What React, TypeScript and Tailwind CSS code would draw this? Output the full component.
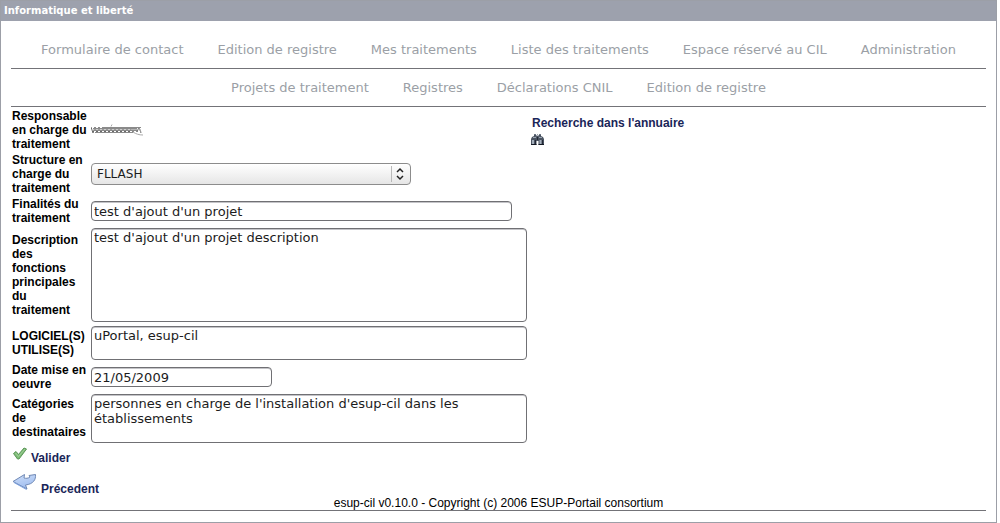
import React from 'react';

const mainMenu = [
  'Formulaire de contact',
  'Edition de registre',
  'Mes traitements',
  'Liste des traitements',
  'Espace réservé au CIL',
  'Administration',
];

const subMenu = ['Projets de traitement', 'Registres', 'Déclarations CNIL', 'Edition de registre'];

const fontUi = "font-['DejaVu_Sans',sans-serif] text-[#1c1c1c]";
const box = `${fontUi} text-[13px] block max-w-full bg-white border border-[#707074] rounded-[4px] px-[2px] shadow-[inset_0_1px_0_#c4c4c8]`;
const linkStyle = 'font-bold text-[#1a2558] hover:underline';

const Menu = ({ items, label, height }: { items: string[]; label: string; height: string }) => (
  <nav aria-label={label} className={`border-b border-[#737378] ${height}`}>
    <ul className="flex flex-wrap justify-center gap-x-[34px]">
      {items.map((item) => (
        <li key={item}>
          <a href="#" className="font-['DejaVu_Sans',sans-serif] text-[13px] leading-[18px] text-[#9b9fa6] hover:underline block">
            {item}
          </a>
        </li>
      ))}
    </ul>
  </nav>
);

const Row = ({ label, id, height, children }: { label: React.ReactNode; id: string; height: string; children: React.ReactNode }) => (
  <div className={`grid grid-cols-[77px_438px_1fr] gap-x-[2px] items-center ${height}`}>
    <label htmlFor={id} className="font-bold">{label}</label>
    {children}
  </div>
);

const Binoculars = () => (
  <svg width="13" height="12" viewBox="0 0 13 12" aria-hidden="true">
    <path d="M3 1h2v2h3V1h2v2l2 1 1 2v6H7.500V8h-2v4H0V6l1-2 2-1z" fill="#4a5361" />
    <path d="M3 1.500h2M8 1.500h2" stroke="#6d7683" />
    <path d="M2 4.500h3M8 4.500h3" stroke="#98a2b0" />
    <path d="M1 7h2v4H1zM8.500 7h2v4h-2z" fill="#a3aebb" />
    <path d="M4.500 7v4M11.500 7v4" stroke="#222936" />
    <path d="M5 3.500L6.500 1.500 8 3.500" stroke="#7d8694" fill="none" />
    <path d="M0 11.500h5.500M7.500 11.500H13" stroke="#151a24" />
    <path d="M6.500 4v3" stroke="#222936" />
  </svg>
);

const CheckIcon = () => (
  <svg width="16" height="14" viewBox="0 0 16 14" aria-hidden="true">
    <path d="M1.500 6.500L4 4.500l2.500 3L12 1l2.500 1L7 12H5.500z" fill="#7dbb76" stroke="#5a9657" strokeLinejoin="round" />
    <path d="M3.500 6l3 3.500L13 2" stroke="#9fd198" fill="none" />
  </svg>
);

const BackIcon = () => (
  <svg width="25" height="19" viewBox="0 0 25 19" aria-hidden="true">
    <defs>
      <linearGradient id="back" x1="0" y1="0" x2="0.400" y2="1">
        <stop offset="0" stopColor="#cfdff8" />
        <stop offset="1" stopColor="#9fbdf0" />
      </linearGradient>
    </defs>
    <path
      d="M1 8.500L12.500 1.500 12 5c2 .5 4 .5 6-1l-1-1.500 6.500-1c.5 5-2 9.500-10 10.500l1.500 4z"
      fill="url(#back)"
      stroke="#7089b5"
      strokeLinejoin="round"
    />
    <path d="M2 9.500l12.500 7" stroke="#7da2e0" fill="none" />
  </svg>
);

// Hand-scribbled strike hiding the person's name
const Scribble = () => (
  <svg width="54" height="14" viewBox="0 0 54 14" role="img" aria-label="Nom masqué">
    <path d="M0 4l2 6 2-6 2 6 2-6 2 6 2-6 2 6 2-6 2 6 2-6 2 6 2-6 2 6 2-6 2 6 2-6 2 6 2-6 2 6 2-6 2 5 2-5 2 5 2-5 2 6" stroke="#6a6a6a" fill="none" />
    <path d="M2 5.500h44M3 7.500h43M12 4.500h38M4 9.500h38" stroke="#8a8a8a" fill="none" />
    <path d="M20 3.500l1-2M42 9c3 2 6 3 10 3M48 5l2 4" stroke="#aaa" fill="none" />
  </svg>
);

export default function App() {
  return (
    <div className="mr-[3px] min-h-screen border border-[#9c9fa7] bg-white font-['Liberation_Sans',Arial,sans-serif] text-[12px] leading-[14px] text-black">
      <h1 className="h-5 bg-[#9da1ad] px-[3px] font-['DejaVu_Sans',sans-serif] text-[10px] leading-[19px] font-bold text-white">
        Informatique et liberté
      </h1>

      <div className="px-[10px] pt-5">
        <Menu items={mainMenu} label="Menu principal" height="h-7" />
        <Menu items={subMenu} label="Administration" height="pt-[10px] h-[38px]" />

        <form className="px-px pt-[2px]" onSubmit={(e) => e.preventDefault()}>
          <div className="flex flex-col gap-[2px]">
            <div className="grid grid-cols-[77px_438px_1fr] gap-x-[2px] items-center">
              <span className="font-bold">Responsable en charge du traitement</span>
              <Scribble />
              <div>
                <a href="#" className={`${linkStyle} block px-px`}>Recherche dans l'annuaire</a>
                <button type="button" aria-label="Rechercher" className="block pt-[3px]">
                  <Binoculars />
                </button>
              </div>
            </div>

            <Row label="Structure en charge du traitement" id="structure" height="h-[42px]">
              <div className="relative w-[320px]">
                <select
                  id="structure"
                  className={`${fontUi} text-[12px] block w-full h-[22px] appearance-none rounded-[4px] border border-[#8c8c8c] bg-linear-to-b from-white to-[#e6e6e6] pl-[5px] pr-6`}
                >
                  <option>FLLASH</option>
                </select>
                <svg className="absolute right-0 top-0 pointer-events-none" width="22" height="22" viewBox="0 0 22 22" aria-hidden="true">
                  <path d="M2.500 3v16" stroke="#b9b9b9" />
                  <path d="M8 9l3-3 3 3M8 13l3 3 3-3" stroke="#222" strokeWidth="1.500" fill="none" />
                </svg>
              </div>
            </Row>

            <Row label="Finalités du traitement" id="finalites" height="h-[28px]">
              <input id="finalites" type="text" defaultValue="test d'ajout d'un projet" className={`${box} w-[421px] h-5`} />
            </Row>

            <Row label={<>Description des fonctions principales du<br />traitement</>} id="description" height="h-[96px]">
              <textarea
                id="description"
                defaultValue="test d'ajout d'un projet description"
                className={`${box} w-[436px] h-[94px] resize-none leading-[15px] pt-px`}
              />
            </Row>

            <Row label="LOGICIEL(S) UTILISE(S)" id="logiciels" height="h-[36px]">
              <textarea
                id="logiciels"
                defaultValue="uPortal, esup-cil"
                className={`${box} w-[436px] h-[34px] resize-none leading-[15px] pt-px`}
              />
            </Row>

            <Row label="Date mise en oeuvre" id="date" height="h-[28px]">
              <input id="date" type="text" defaultValue="21/05/2009" className={`${box} w-[181px] h-5`} />
            </Row>

            <Row label="Catégories de destinataires" id="destinataires" height="h-[50px]">
              <textarea
                id="destinataires"
                defaultValue="personnes en charge de l'installation d'esup-cil dans les établissements"
                className={`${box} w-[436px] h-[49px] resize-none leading-[15px] pt-px`}
              />
            </Row>
          </div>

          <button type="submit" className={`${linkStyle} mt-1 flex items-end gap-[3px]`}>
            <span className="pb-1"><CheckIcon /></span>
            Valider
          </button>
          <a href="#" className={`${linkStyle} mt-2 flex w-fit items-end gap-1`}>
            <span className="pb-1"><BackIcon /></span>
            Précedent
          </a>
        </form>

        <footer className="border-b border-[#737378] text-center">
          esup-cil v0.10.0 - Copyright (c) 2006 ESUP-Portail consortium
        </footer>
      </div>
    </div>
  );
}
